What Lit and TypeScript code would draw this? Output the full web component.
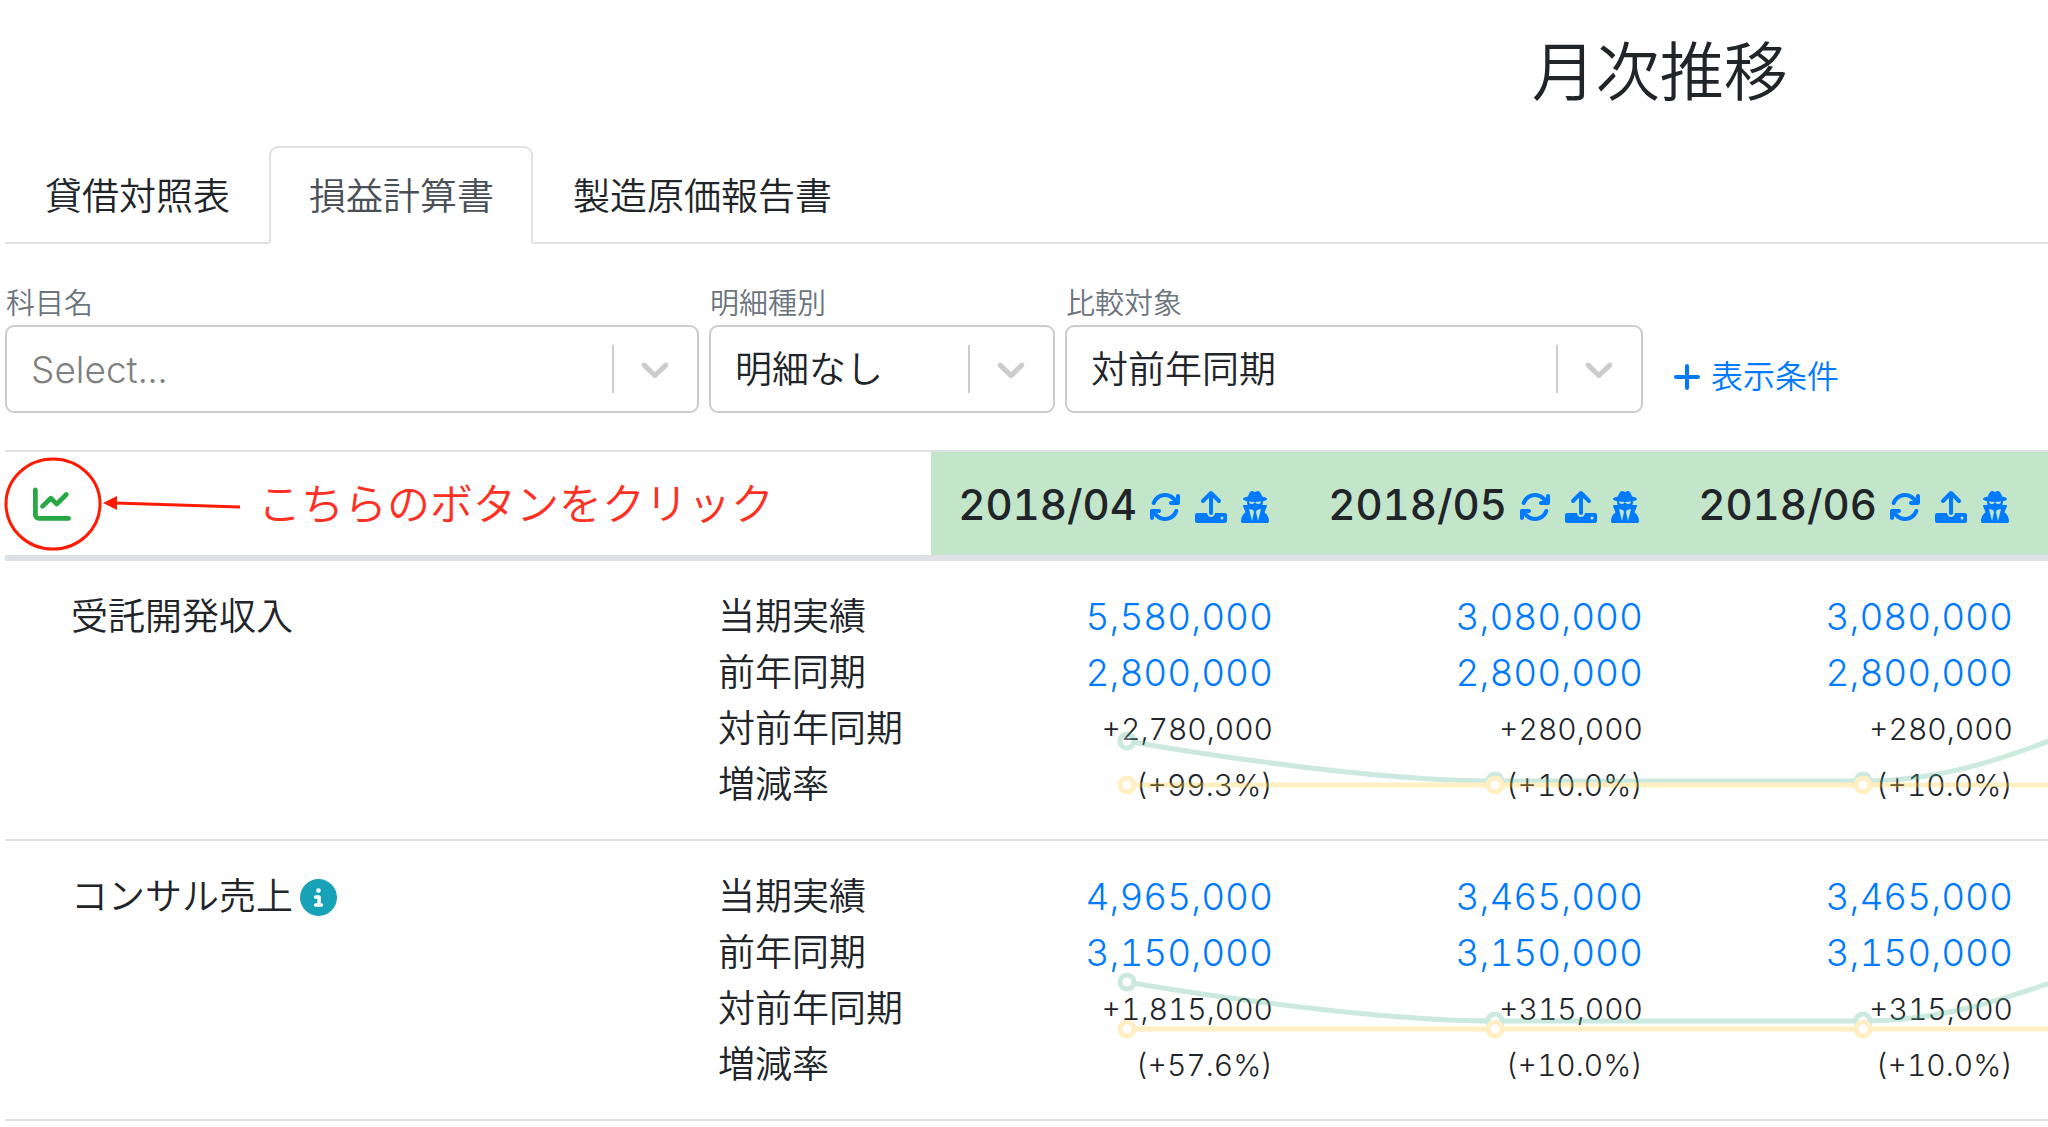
import { LitElement, html, css, svg, nothing } from "lit";
import { customElement } from "lit/decorators.js";

interface Cell { current: string; previous: string; diff: string; rate: string; }
interface Trend { current: string; previous: number; points: number[]; }
interface Account { name: string; info: boolean; cells: Cell[]; trend: Trend; }

const months = ["2018/04", "2018/05", "2018/06"];
const pointX = [196, 564, 932, 1300];

const accounts: Account[] = [
  {
    name: "受託開発収入",
    info: false,
    cells: [
      { current: "5,580,000", previous: "2,800,000", diff: "+2,780,000", rate: "(+99.3%)" },
      { current: "3,080,000", previous: "2,800,000", diff: "+280,000", rate: "(+10.0%)" },
      { current: "3,080,000", previous: "2,800,000", diff: "+280,000", rate: "(+10.0%)" },
    ],
    trend: {
      current: "M196 180C196 180 417 220 564 220H932C1079 220 1169 140 1300 130",
      previous: 224, points: [180, 220, 220, 130],
    },
  },
  {
    name: "コンサル売上",
    info: true,
    cells: [
      { current: "4,965,000", previous: "3,150,000", diff: "+1,815,000", rate: "(+57.6%)" },
      { current: "3,465,000", previous: "3,150,000", diff: "+315,000", rate: "(+10.0%)" },
      { current: "3,465,000", previous: "3,150,000", diff: "+315,000", rate: "(+10.0%)" },
    ],
    trend: {
      current: "M196 141C196 141 417 180 564 180H932C1079 180 1169 105 1300 93",
      previous: 188, points: [141, 180, 180, 93],
    },
  },
];

const icons = {
  chart: "M64 64c0-17.7-14.3-32-32-32S0 46.3 0 64V400c0 44.2 35.8 80 80 80H480c17.7 0 32-14.3 32-32s-14.3-32-32-32H80c-8.8 0-16-7.2-16-16V64zm406.6 86.6c12.5-12.5 12.5-32.8 0-45.3s-32.8-12.5-45.3 0L320 210.7l-57.4-57.4c-12.5-12.5-32.8-12.5-45.3 0l-112 112c-12.5 12.5-12.5 32.8 0 45.3s32.8 12.5 45.3 0L240 221.3l57.4 57.4c12.5 12.5 32.8 12.5 45.3 0l128-128z",
  rotate: "M105.1 202.6c7.7-21.8 20.2-42.3 37.8-59.8c62.5-62.5 163.8-62.5 226.3 0L386.3 160H352c-17.7 0-32 14.3-32 32s14.3 32 32 32H463.5c0 0 0 0 0 0h.4c17.7 0 32-14.3 32-32V80c0-17.7-14.3-32-32-32s-32 14.3-32 32v35.2L414.4 97.6c-87.5-87.5-229.3-87.5-316.8 0C73.2 122 55.6 150.7 44.8 181.4c-5.9 16.7 2.9 34.9 19.5 40.8s34.9-2.9 40.8-19.5zM39 289.3c-5 1.5-9.8 4.2-13.7 8.2c-4 4-6.7 8.8-8.1 14c-.3 1.2-.6 2.5-.8 3.8c-.3 1.7-.4 3.4-.4 5.1V432c0 17.7 14.3 32 32 32s32-14.3 32-32V396.9l17.6 17.5 0 0c87.5 87.4 229.3 87.4 316.7 0c24.4-24.4 42.1-53.1 52.9-83.7c5.9-16.7-2.9-34.9-19.5-40.8s-34.9 2.9-40.8 19.5c-7.7 21.8-20.2 42.3-37.8 59.8c-62.5 62.5-163.8 62.5-226.3 0l-.1-.1L125.6 352H160c17.7 0 32-14.3 32-32s-14.3-32-32-32H48.4c-1.6 0-3.2 .1-4.8 .3s-3.1 .5-4.6 1z",
  upload: "M288 109.3V352c0 17.7-14.3 32-32 32s-32-14.3-32-32V109.3l-73.4 73.4c-12.5 12.5-32.8 12.5-45.3 0s-12.5-32.8 0-45.3l128-128c12.5-12.5 32.8-12.5 45.3 0l128 128c12.5 12.5 12.5 32.8 0 45.3s-32.8 12.5-45.3 0L288 109.3zM32 352H192c0 35.3 28.7 64 64 64s64-28.700 64-64H480c17.700 0 32 14.300 32 32v96c0 17.700-14.300 32-32 32H32c-17.700 0-32-14.300-32-32V384c0-17.700 14.300-32 32-32zM432 456a24 24 0 1 0 0-48 24 24 0 1 0 0 48z",
  secret: "M224 16c-6.700 0-10.800-2.800-15.500-6.100C201.900 5.400 194 0 176 0c-30.500 0-52 43.700-66 89.400C62.700 98.100 32 112.200 32 128c0 14.300 25 27.100 64.600 35.900c-.4 4-.6 8-.6 12.100c0 17 3.300 33.200 9.300 48H45.400C38 224 32 230 32 237.400c0 1.700 .3 3.400 1 5l38.800 96.900C28.200 371.800 0 423.800 0 482.300C0 498.700 13.300 512 29.700 512H418.300c16.400 0 29.700-13.300 29.700-29.700c0-58.500-28.200-110.400-71.700-143L415 242.400c.6-1.600 1-3.300 1-5c0-7.400-6-13.400-13.400-13.400H342.700c6-14.800 9.300-31 9.300-48c0-4.100-.2-8.100-.6-12.100C391 155.100 416 142.300 416 128c0-15.800-30.700-29.900-78-38.600C324 43.700 302.500 0 272 0c-18 0-25.900 5.400-32.500 9.900C234.700 13.200 230.700 16 224 16zm56 192H267.600c-16.500 0-31.100-10.600-36.300-26.200c-2.300-7-12.200-7-14.500 0C211.600 197.400 196.900 208 180.400 208H168c-22.100 0-40-17.900-40-40V169.600c28.300 4.100 61 6.400 96 6.400s67.700-2.300 96-6.400V168c0 22.100-17.900 40-40 40zm-88 96l16 32L176 480 128 288l64 16zm128-16L272 480 240 336l16-32 64-16z",
  plus: "M256 80c0-17.700-14.300-32-32-32s-32 14.300-32 32V224H48c-17.700 0-32 14.300-32 32s14.300 32 32 32H192V432c0 17.700 14.300 32 32 32s32-14.300 32-32V288H400c17.700 0 32-14.300 32-32s-14.300-32-32-32H256V80z",
  info: "M256 512A256 256 0 1 0 256 0a256 256 0 1 0 0 512zM216 336h24V272H216c-13.300 0-24-10.700-24-24s10.700-24 24-24h48c13.300 0 24 10.700 24 24v88h8c13.300 0 24 10.700 24 24s-10.700 24-24 24H216c-13.300 0-24-10.700-24-24s10.700-24 24-24zm40-208a32 32 0 1 1 0 64 32 32 0 1 1 0-64z",
  chevron: "M4.516 7.548c0.436-0.446 1.043-0.481 1.576 0l3.908 3.747 3.908-3.747c0.533-0.481 1.141-0.446 1.574 0 0.436 0.445 0.408 1.197 0 1.615-0.406 0.418-4.695 4.502-4.695 4.502-0.217 0.223-0.502 0.335-0.787 0.335s-0.570-0.112-0.789-0.335c0 0-4.287-4.084-4.695-4.502s-0.436-1.170 0-1.615z",
};

const icon = (path: string, width = 512, height = 512) => html`
  <svg class="icon" viewBox="0 0 ${width} ${height}" aria-hidden="true">${svg`<path d=${path} />`}</svg>`;

@customElement("app-root")
export class AppRoot extends LitElement {
  static styles = css`
    :host {
      display: block;
      overflow: hidden;
      background: #fff;
      color: #212529;
      font-family: Inter, "Noto Sans CJK JP", sans-serif;
      font-size: 37px;
      font-weight: 350;
      line-height: 56px;
      font-variant-numeric: tabular-nums;
    }
    * { box-sizing: border-box; }
    button, select { font: inherit; color: inherit; }
    button { background: none; border: 0; padding: 0; cursor: pointer; }
    a { color: #007bff; text-decoration: none; }
    .icon { display: block; flex: none; fill: currentColor; }
    .page { padding-left: 5px; }
    .heading {
      width: 162%;
      margin: 0;
      padding: 32px 0 34px;
      text-align: center;
      font-size: 64px;
      font-weight: 350;
      line-height: 80px;
    }
    .tabs { display: flex; border-bottom: 2px solid #dee2e6; }
    .tab {
      margin-bottom: -2px;
      padding: 21px 37px 17px 38px;
      border: 2px solid transparent;
      border-radius: 9px 9px 0 0;
    }
    .tab.active { color: #495057; background: #fff; border-color: #dee2e6 #dee2e6 #fff; }
    .filters { display: flex; gap: 10px; padding: 39px 0 37px; }
    .field { display: flex; flex-direction: column; }
    .field label { padding-left: 1px; font-size: 29px; line-height: 42px; color: #6c757d; }
    .account { flex: 0 1 694px; }
    .detail { flex: 0 1 346px; }
    .compare { flex: 0 1 578px; }
    .picker { display: grid; grid-template-columns: 1fr 87px; align-items: center; }
    .picker select {
      grid-area: 1 / 1 / 2 / 3;
      width: 100%;
      height: 88px;
      padding: 2px 96px 0 24px;
      border: 2px solid #ccc;
      border-radius: 9px;
      background: #fff;
      appearance: none;
    }
    .picker select.empty { color: #808080; }
    .arrow {
      grid-area: 1 / 2;
      display: flex;
      justify-content: center;
      height: 48px;
      align-items: center;
      padding-right: 3px;
      border-left: 2px solid #ccc;
      color: #ccc;
      pointer-events: none;
    }
    .arrow .icon { width: 46px; height: 46px; }
    .more {
      align-self: flex-end;
      display: flex;
      align-items: center;
      gap: 10px;
      margin: 0 0 8px 20px;
      color: #007bff;
      font-size: 32px;
      white-space: nowrap;
    }
    .more .icon { width: 28px; height: 32px; }
    table { width: 100%; border-collapse: separate; border-spacing: 0; table-layout: fixed; }
    .col-name { width: 686px; }
    .col-label { width: 240px; }
    .col-month { width: 370px; }
    th, td { padding: 0; text-align: left; vertical-align: top; font-weight: 350; }
    thead th {
      height: 111px;
      border-top: 2px solid #dee2e6;
      border-bottom: 6px solid #dee2e6;
      vertical-align: middle;
    }
    thead .month { background: #c3e6cb; }
    .month-head { display: flex; align-items: center; justify-content: flex-end; gap: 12px; padding: 2px 32px 0 0; }
    .month-head span { font-weight: 500; font-size: 42px; }
    .month-head .tools { display: flex; gap: 14px; margin-top: 4px; color: #007bff; }
    .tools .icon { height: 32px; width: 32px; }
    .tools button:last-child .icon { width: 28px; }
    .guide { position: relative; display: flex; align-items: center; height: 102px; }
    .graph { margin-left: 28px; color: #28a745; }
    .graph .icon { width: 38px; height: 38px; }
    .callout { position: absolute; left: 0; top: 0; width: 240px; height: 102px; overflow: visible; }
    .note { padding-left: 187px; font-size: 43px; color: #ff2f24; white-space: nowrap; }
    tbody th, tbody td { padding: 28px 28px 26px; border-bottom: 2px solid #dee2e6; }
    tbody th { padding-left: 66px; }
    .name { display: flex; align-items: center; gap: 7px; }
    .name .icon { width: 37px; height: 37px; color: #17a2b8; }
    tbody td.rest { padding: 0; }
    tbody td.labels { padding: 28px 0 26px 27px; white-space: nowrap; }
    .amounts { position: relative; text-align: right; }
    .amounts a, .amounts span, .labels span { display: block; }
    .amounts span { font-size: 30px; }
    .trend {
      position: absolute;
      left: 0;
      top: 0;
      z-index: 1;
      width: 370px;
      height: 278px;
      overflow: visible;
      opacity: 0.3;
      pointer-events: none;
      fill: none;
      stroke-width: 5;
    }
    .trend .now { stroke: #55b893; }
    .trend .before { stroke: #ffcd39; }
    .trend circle { fill: #fff; }
  `;

  private picker(id: string, kind: string, label: string, value: string) {
    return html`
      <div class="field ${kind}">
        <label for=${id}>${label}</label>
        <div class="picker">
          <select id=${id} class=${value === "Select..." ? "empty" : ""}><option>${value}</option></select>
          <span class="arrow">${icon(icons.chevron, 20, 20)}</span>
        </div>
      </div>`;
  }

  private trend(t: Trend) {
    return html`
      <svg class="trend" viewBox="0 0 370 278" aria-hidden="true">
        <path class="now" d=${t.current} />
        ${pointX.map((x, i) => svg`<circle class="now" cx=${x} cy=${t.points[i]} r="7" />`)}
        <path class="before" d="M196 ${t.previous}H1300" />
        ${pointX.map((x) => svg`<circle class="before" cx=${x} cy=${t.previous} r="7" />`)}
      </svg>`;
  }

  render() {
    return html`
      <main class="page">
        <h1 class="heading">月次推移</h1>
        <nav class="tabs">
          <button class="tab">貸借対照表</button>
          <button class="tab active">損益計算書</button>
          <button class="tab">製造原価報告書</button>
        </nav>
        <form class="filters">
          ${this.picker("account", "account", "科目名", "Select...")}
          ${this.picker("detail", "detail", "明細種別", "明細なし")}
          ${this.picker("compare", "compare", "比較対象", "対前年同期")}
          <button type="button" class="more">${icon(icons.plus, 448)}表示条件</button>
        </form>
        <table>
          <colgroup>
            <col class="col-name" /><col class="col-label" />
            ${months.map(() => html`<col class="col-month" />`)}<col />
          </colgroup>
          <thead>
            <tr>
              <th colspan="2">
                <div class="guide">
                  <button class="graph">${icon(icons.chart)}</button>
                  <span class="note">こちらのボタンをクリック</span>
                  <svg class="callout" viewBox="0 0 240 102" aria-hidden="true">
                    <ellipse cx="48" cy="51" rx="47" ry="45" fill="none" stroke="#ff1a00" stroke-width="3" />
                    <path d="M110 50L235 54" stroke="#ff1a00" stroke-width="3" />
                    <path d="M98 50L112 43V57Z" fill="#ff1a00" />
                  </svg>
                </div>
              </th>
              ${months.map((m) => html`
                <th class="month">
                  <div class="month-head">
                    <span>${m}</span>
                    <div class="tools">
                      <button>${icon(icons.rotate)}</button>
                      <button>${icon(icons.upload)}</button>
                      <button>${icon(icons.secret, 448)}</button>
                    </div>
                  </div>
                </th>`)}
              <th class="month"></th>
            </tr>
          </thead>
          <tbody>
            ${accounts.map((a) => html`
              <tr>
                <th><div class="name">${a.name}${a.info ? icon(icons.info) : nothing}</div></th>
                <td class="labels">
                  <span>当期実績</span><span>前年同期</span><span>対前年同期</span><span>増減率</span>
                </td>
                ${a.cells.map((c, i) => html`
                  <td class="amounts">
                    <a href="#">${c.current}</a><a href="#">${c.previous}</a>
                    <span>${c.diff}</span><span>${c.rate}</span>
                    ${i === 0 ? this.trend(a.trend) : nothing}
                  </td>`)}
                <td class="rest"></td>
              </tr>`)}
          </tbody>
        </table>
      </main>`;
  }
}
